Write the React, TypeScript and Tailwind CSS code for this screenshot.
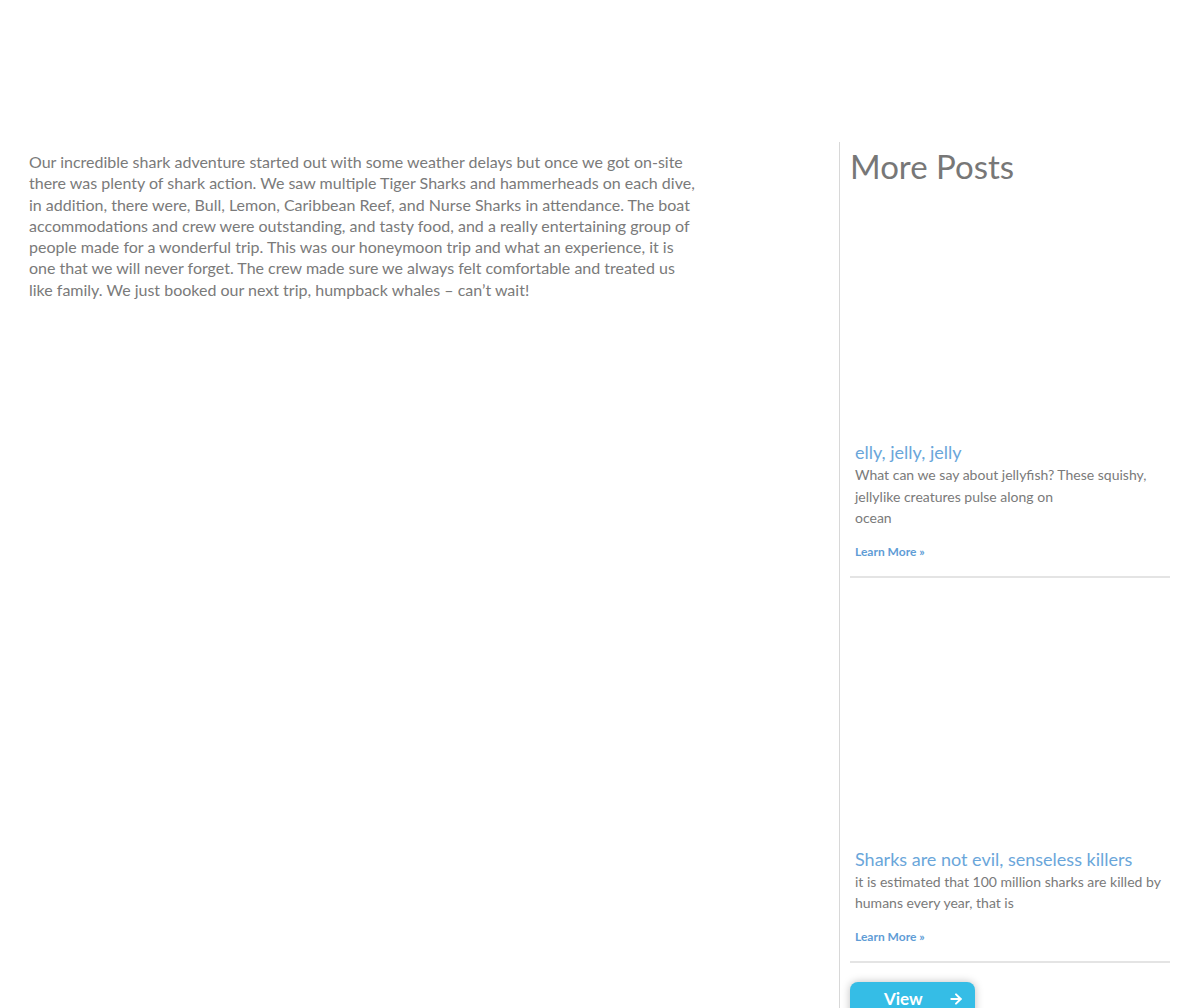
import { ArrowRight } from "lucide-react";

interface Post {
  title: string;
  lines: string[];
  spacer: string;
}

const posts: Post[] = [
  {
    title: "elly, jelly, jelly",
    lines: [
      "What can we say about jellyfish? These squishy, jellylike creatures pulse along on",
      "ocean",
    ],
    spacer: "h-[255px]",
  },
  {
    title: "Sharks are not evil, senseless killers",
    lines: ["it is estimated that 100 million sharks are killed by humans every year, that is"],
    spacer: "h-[270px]",
  },
];

export default function App() {
  return (
    <div className="min-h-[1008px] bg-white font-['Lato','Noto_Sans',sans-serif] text-[#7a7a7a]">
      <div className="h-[142px]" />
      <div className="flex">
        {/* Story */}
        <div className="w-[839px] shrink-0 pl-[29px] pt-[9px]">
          <p className="w-[670px] text-[16px] leading-[21.3px]">
            Our incredible shark adventure started out with some weather delays but once we got on-site
            there was plenty of shark action. We saw multiple Tiger Sharks and hammerheads on each dive,
            in addition, there were, Bull, Lemon, Caribbean Reef, and Nurse Sharks in attendance. The boat
            accommodations and crew were outstanding, and tasty food, and a really entertaining group of
            people made for a wonderful trip. This was our honeymoon trip and what an experience, it is
            one that we will never forget. The crew made sure we always felt comfortable and treated us
            like family. We just booked our next trip, humpback whales – can’t wait!
          </p>
        </div>

        {/* Sidebar */}
        <aside className="min-h-[866px] border-l border-[#d8d8d8] pl-[10px]">
          <div className="w-[320px]">
            <h2 className="pt-[4px] text-[33px] leading-[40px] text-[#777777]">More Posts</h2>

            {posts.map((post) => (
              <div key={post.title} className="border-b-2 border-[#e4e4e4]">
                <div className={post.spacer} />
                <div className="px-[5px] pb-[15px]">
                  <h3 className="text-[18px] leading-[23px] text-[#6aa6da]">{post.title}</h3>
                  <p className="text-[14px] leading-[21.5px] text-[#7a7a7a]">
                    {post.lines.map((line, i) => (
                      <span key={i}>
                        {line}
                        {i < post.lines.length - 1 && <br />}
                      </span>
                    ))}
                  </p>
                  <a className="mt-[14px] block text-[12px] font-bold leading-[18px] text-[#5f9dd6]">
                    Learn More »
                  </a>
                </div>
              </div>
            ))}

            <button className="mt-[19px] flex h-[40px] w-[125px] items-start rounded-[8px] bg-[#35bde6] pl-[34px] pt-[7px] text-white shadow-[0_0_8px_rgba(0,0,0,0.25)]">
              <span className="text-[17px] font-bold leading-[20px]">View</span>
              <ArrowRight className="ml-[25px] mt-[2px] h-[16px] w-[16px]" strokeWidth={3} />
            </button>
          </div>
        </aside>
      </div>
    </div>
  );
}
